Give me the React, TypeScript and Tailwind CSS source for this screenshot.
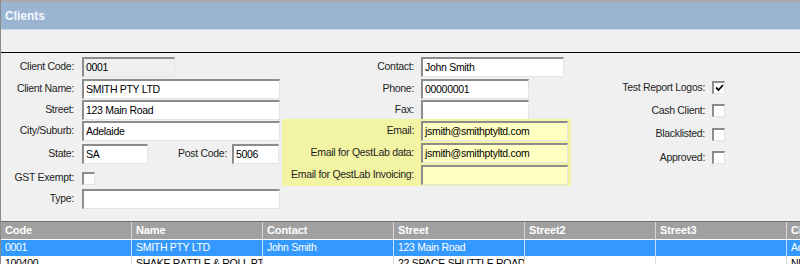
import React from 'react';

const sunken = 'border-t-2 border-l-2 border-r border-b border-t-[#8c8c8c] border-l-[#8c8c8c] border-r-[#e4e4e4] border-b-[#e4e4e4]';

function Field({ w, value = '', disabled = false, tint = false }: { w: number; value?: string; disabled?: boolean; tint?: boolean }) {
  const bg = disabled ? 'bg-[#f0f0f0]' : tint ? 'bg-[#ffffc2]' : 'bg-white';
  return (
    <div className={`h-[20px] ${sunken} ${bg} flex items-center pl-[2px] text-[10.5px] text-black whitespace-nowrap overflow-hidden`} style={{ width: w }}>
      {value}
    </div>
  );
}

function Check({ checked = false }: { checked?: boolean }) {
  return (
    <div className={`w-[13px] h-[13px] bg-white ${sunken} flex items-center justify-center`}>
      {checked && (
        <svg width="9" height="8" viewBox="0 0 9 8">
          <path d="M1 3.5 L3.5 6 L8 1" stroke="#000" strokeWidth="1.8" fill="none" />
        </svg>
      )}
    </div>
  );
}

const cols = ['Code', 'Name', 'Contact', 'Street', 'Street2', 'Street3', 'City'];
const rows = [
  ['0001', 'SMITH PTY LTD', 'John Smith', '123 Main Road', '', '', 'Adelaide'],
  ['100400', 'SHAKE RATTLE & ROLL PTY', '', '22 SPACE SHUTTLE ROAD', '', '', 'NUNAWADING'],
];

export default function App() {
  return (
    <div className="w-[800px] h-[264px] overflow-hidden bg-[#f0f0f0] border-l border-[#8a8a8a] font-['Liberation_Sans',Arial,sans-serif] text-[10.5px] tracking-[-0.3px] text-[#1e1e1e]">
      <div className="h-[2px] bg-[#a8a8a8]" />
      <div className="h-[28px] bg-[#9ab4d2] border-b border-[#c8d8ea] flex items-center pl-[4px] text-[12px] tracking-normal font-bold text-[#f4f7fb]">
        Clients
      </div>
      <div className="h-[23px] border-b border-black" />

      {/* Form */}
      <div className="h-[168px] flex pt-[4px]">
        {/* Left column */}
        <div className="w-[281px] flex flex-col">
          <div className="h-[22px] flex items-start">
            <div className="w-[73px] h-[20px] flex items-center justify-end">Client Code:</div>
            <div className="ml-[8px]"><Field w={93} value="0001" disabled /></div>
          </div>
          <div className="h-[21px] flex items-start">
            <div className="w-[73px] h-[20px] flex items-center justify-end">Client Name:</div>
            <div className="ml-[8px]"><Field w={198} value="SMITH PTY LTD" /></div>
          </div>
          <div className="h-[21px] flex items-start">
            <div className="w-[73px] h-[20px] flex items-center justify-end">Street:</div>
            <div className="ml-[8px]"><Field w={198} value="123 Main Road" /></div>
          </div>
          <div className="h-[23px] flex items-start">
            <div className="w-[73px] h-[20px] flex items-center justify-end">City/Suburb:</div>
            <div className="ml-[8px]"><Field w={198} value="Adelaide" /></div>
          </div>
          <div className="h-[23px] flex items-start">
            <div className="w-[73px] h-[20px] flex items-center justify-end">State:</div>
            <div className="ml-[8px]"><Field w={66} value="SA" /></div>
            <div className="w-[79px] h-[20px] flex items-center justify-end">Post Code:</div>
            <div className="ml-[5px]"><Field w={47} value="5006" /></div>
          </div>
          <div className="h-[22px] flex items-center">
            <div className="w-[73px] flex items-center justify-end">GST Exempt:</div>
            <div className="ml-[8px]"><Check /></div>
          </div>
          <div className="h-[20px] flex items-start">
            <div className="w-[73px] h-[20px] flex items-center justify-end">Type:</div>
            <div className="ml-[8px]"><Field w={198} /></div>
          </div>
        </div>

        {/* Middle column */}
        <div className="w-[289px] flex flex-col">
          <div className="h-[22px] flex items-start">
            <div className="w-[132px] h-[20px] flex items-center justify-end">Contact:</div>
            <div className="ml-[7px]"><Field w={143} value="John Smith" /></div>
          </div>
          <div className="h-[21px] flex items-start">
            <div className="w-[132px] h-[20px] flex items-center justify-end">Phone:</div>
            <div className="ml-[7px]"><Field w={108} value="00000001" /></div>
          </div>
          <div className="h-[19px] flex items-start">
            <div className="w-[132px] h-[20px] flex items-center justify-end">Fax:</div>
            <div className="ml-[7px]"><Field w={108} /></div>
          </div>
          <div className="h-[67px] bg-[#f3f3a4] flex flex-col pt-[2px]">
            <div className="h-[22px] flex items-start">
              <div className="w-[132px] h-[20px] flex items-center justify-end">Email:</div>
              <div className="ml-[7px]"><Field w={147} value="jsmith@smithptyltd.com" tint /></div>
            </div>
            <div className="h-[22px] flex items-start">
              <div className="w-[132px] h-[20px] flex items-center justify-end">Email for QestLab data:</div>
              <div className="ml-[7px]"><Field w={147} value="jsmith@smithptyltd.com" tint /></div>
            </div>
            <div className="h-[20px] flex items-start">
              <div className="w-[132px] h-[20px] flex items-center justify-end whitespace-nowrap">Email for QestLab Invoicing:</div>
              <div className="ml-[7px]"><Field w={147} tint /></div>
            </div>
          </div>
        </div>

        {/* Right column */}
        <div className="flex-1 flex flex-col pt-[24px]">
          {[
            ['Test Report Logos:', true],
            ['Cash Client:', false],
            ['Blacklisted:', false],
            ['Approved:', false],
          ].map(([label, checked]) => (
            <div key={label as string} className="h-[23.3px] flex items-start">
              <div className="w-[134px] h-[13px] flex items-center justify-end">{label as string}</div>
              <div className="ml-[7px]"><Check checked={checked as boolean} /></div>
            </div>
          ))}
        </div>
      </div>

      {/* Grid */}
      <div className="border-t border-[#6e6e6e]">
        <div className="h-[18px] flex bg-[#a0a0a0] border-b border-white text-white font-bold text-[11px] tracking-[-0.1px]">
          {cols.map((c) => (
            <div key={c} className="w-[131px] shrink-0 border-r border-[#d8d8d8] flex items-center pl-[4px] overflow-hidden whitespace-nowrap">
              {c}
            </div>
          ))}
        </div>
        {rows.map((r, i) => (
          <div key={i} className={`h-[16px] flex text-[10.5px] ${i === 0 ? 'bg-[#3399ff] text-white' : 'bg-white text-black'}`}>
            {r.map((v, j) => (
              <div key={j} className={`w-[131px] shrink-0 border-r ${i === 0 ? 'border-[#c4dfff]' : 'border-[#d8d8d8]'} flex items-center pl-[4px] overflow-hidden whitespace-nowrap`}>
                {v}
              </div>
            ))}
          </div>
        ))}
      </div>
    </div>
  );
}
